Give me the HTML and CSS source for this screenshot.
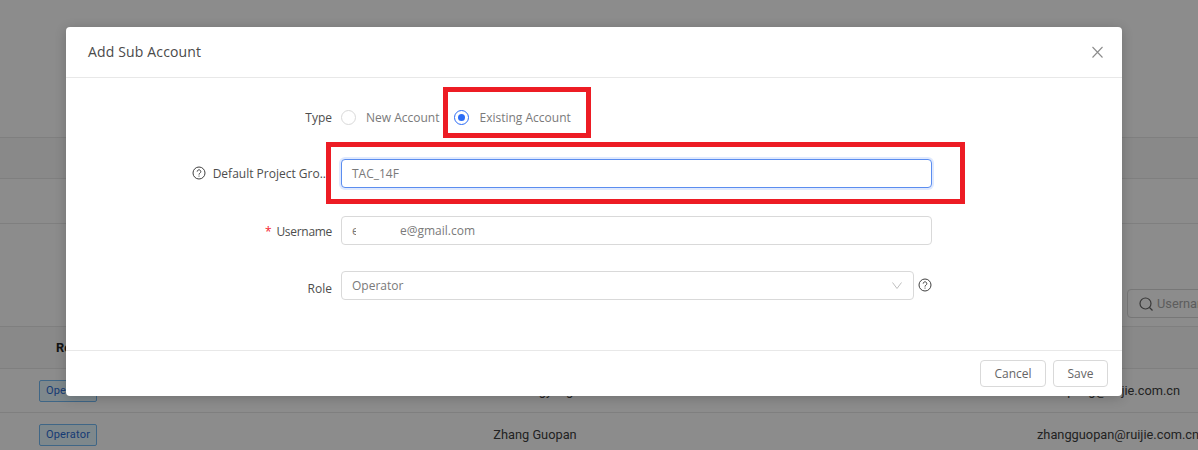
FILE: index.html
```html
<!DOCTYPE html>
<html lang="en">
<head>
    <meta charset="UTF-8">
    <meta name="viewport" content="width=device-width, initial-scale=1.0">
    <title>Add Sub Account</title>
    <link rel="stylesheet" href="styles.css">
</head>
<body>

<!-- Page behind the dialog -->
<div class="page">
    <div class="band band-head"></div>
    <div class="band band-row"></div>
    <div class="toolbar">
        <div class="search">
            <svg class="search-icon" width="14" height="14" viewBox="0 0 14 14"><circle cx="6.5" cy="6.5" r="5.5"/><path d="M10.5 10.5l3 3"/></svg>
            <span>Username</span>
        </div>
    </div>
    <div class="table-head"><span class="col-role">Role</span></div>
    <div class="table-row">
        <span class="col-role"><span class="tag">Operator</span></span>
        <span class="col-name">Liu Pengyang</span>
        <span class="col-mail">liupeng@ruijie.com.cn</span>
    </div>
    <div class="table-row">
        <span class="col-role"><span class="tag">Operator</span></span>
        <span class="col-name">Zhang Guopan</span>
        <span class="col-mail">zhangguopan@ruijie.com.cn</span>
    </div>
</div>

<div class="mask"></div>

<!-- Dialog -->
<div class="modal">
    <div class="modal-header">
        <span class="modal-title">Add Sub Account</span>
        <svg class="close" width="11" height="12" viewBox="0 0 11 12"><path d="M.5 1l10 10.5M10.5 1L.5 11.5"/></svg>
    </div>
    <div class="modal-body">
        <div class="form-row row-type">
            <label class="form-label">Type</label>
            <div class="radios">
                <span class="radio"><span class="radio-dot"></span>New Account</span>
                <span class="radio radio-on"><span class="radio-dot"></span>Existing Account</span>
            </div>
        </div>
        <div class="form-row row-group">
            <label class="form-label">
                <svg class="help" width="14" height="14" viewBox="0 0 14 14"><circle cx="7" cy="7" r="6"/><path d="M5.2 5.6a1.8 1.8 0 1 1 2.8 1.5c-.7.4-1 .8-1 1.5"/><path d="M7 9.6v1"/></svg>
                <span class="label-cut">Default Project Gro..</span>
            </label>
            <div class="input input-focus">TAC_14F</div>
        </div>
        <div class="form-row row-user">
            <label class="form-label"><span class="required">*</span>Username</label>
            <div class="input input-mail"><span class="mail-start">e</span><span class="mail-hidden"></span>e@gmail.com</div>
        </div>
        <div class="form-row row-role">
            <label class="form-label">Role</label>
            <div class="select-wrap">
                <div class="input select">
                    <span>Operator</span>
                    <svg class="arrow" width="10" height="7" viewBox="0 0 10 7"><path d="M.5 .5L5 6.5 9.5 .5"/></svg>
                </div>
                <svg class="help" width="14" height="14" viewBox="0 0 14 14"><circle cx="7" cy="7" r="6"/><path d="M5.2 5.6a1.8 1.8 0 1 1 2.8 1.5c-.7.4-1 .8-1 1.5"/><path d="M7 9.6v1"/></svg>
            </div>
        </div>
    </div>
    <div class="modal-footer">
        <button class="btn">Cancel</button>
        <button class="btn">Save</button>
    </div>
</div>

<!-- Red annotation boxes -->
<div class="mark mark-radio"></div>
<div class="mark mark-input"></div>

</body>
</html>
```

FILE: styles.css
```css
body {
    margin: 0;
    width: 1198px;
    height: 450px;
    overflow: hidden;
    position: relative;
    font-family: "Open Sans", "Noto Sans", sans-serif;
    font-size: 12px;
    color: #595959;
    background-color: #fff;
}

.page {
    height: 450px;
    padding-top: 137px;
    box-sizing: border-box;
    font-family: Roboto, sans-serif;
    font-size: 12.8px;
}

.band {
    border-top: 1px solid #e8e8e8;
}

.band-head {
    height: 40px;
    background-color: #fafafa;
}

.band-row {
    height: 44px;
}

.toolbar {
    height: 103px;
    border-top: 1px solid #e8e8e8;
    display: flex;
    justify-content: flex-end;
    align-items: flex-end;
    padding-bottom: 8px;
    box-sizing: border-box;
}

.search {
    width: 92px;
    height: 29px;
    margin-right: -21px;
    box-sizing: border-box;
    border: 1px solid #d9d9d9;
    border-radius: 4px;
    display: flex;
    align-items: center;
    gap: 4px;
    padding-left: 11px;
    color: #aaa;
    flex-shrink: 0;
}

.search-icon {
    fill: none;
    stroke: #666;
    stroke-width: 1.2;
    flex-shrink: 0;
}

.table-head {
    height: 42px;
    border-top: 1px solid #e8e8e8;
    background-color: #fafafa;
    display: flex;
    align-items: center;
    box-sizing: border-box;
    font-weight: 700;
    color: #262626;
}

.table-row {
    height: 44px;
    border-top: 1px solid #e8e8e8;
    display: flex;
    align-items: center;
    box-sizing: border-box;
    color: #404040;
}

.col-role {
    width: 58px;
    flex-shrink: 0;
    margin-left: 39px;
}

.table-head .col-role {
    margin-left: 56px;
}

.tag {
    display: block;
    width: 58px;
    height: 22px;
    line-height: 20px;
    box-sizing: border-box;
    text-align: center;
    font-size: 11px;
    letter-spacing: 0.2px;
    color: #2b6cd4;
    background-color: #e6f7ff;
    border: 1px solid #74bbf5;
    border-radius: 2px;
}

.col-name {
    width: 200px;
    margin-left: 338px;
    text-align: center;
    flex-shrink: 0;
}

.col-mail {
    width: 160px;
    margin-left: auto;
    margin-right: 1px;
    text-align: center;
    flex-shrink: 0;
}

.mask {
    position: absolute;
    top: 0;
    left: 0;
    width: 100%;
    height: 100%;
    background-color: rgba(0, 0, 0, 0.45);
}

.modal {
    position: absolute;
    top: 27px;
    left: 66px;
    width: 1056px;
    height: 369px;
    background-color: #fff;
    border-radius: 4px;
    box-shadow: 0 2px 12px rgba(0, 0, 0, 0.2);
    display: flex;
    flex-direction: column;
}

.modal-header {
    height: 50px;
    flex-shrink: 0;
    border-bottom: 1px solid #e8e8e8;
    display: flex;
    align-items: center;
    justify-content: space-between;
    padding: 0 19px 0 22px;
}

.modal-title {
    font-size: 14px;
    font-weight: 500;
    letter-spacing: 0.15px;
    color: #4a4a4a;
    margin-bottom: 2px;
}

.close {
    fill: none;
    stroke: #8c8c8c;
    stroke-width: 1.1;
}

.modal-body {
    flex: 1;
    padding-top: 22px;
}

.form-row {
    display: flex;
    align-items: center;
}

.row-type {
    height: 36px;
    margin-top: -1px;
}

.row-group {
    height: 30px;
    margin-top: 23px;
}

.row-user {
    height: 30px;
    margin-top: 27px;
}

.row-role {
    height: 30px;
    margin-top: 25px;
}

.form-label {
    width: 266px;
    flex-shrink: 0;
    margin-right: 9px;
    display: flex;
    align-items: center;
    justify-content: flex-end;
    color: #4d4d4d;
}

.row-user .form-label {
    letter-spacing: -0.3px;
    padding-top: 2px;
}

.row-role .form-label {
    margin-top: 6px;
}

.label-cut {
    margin-left: 7px;
    margin-right: 6px;
}

.required {
    color: #f5222d;
    margin-right: 5px;
}

.radios {
    display: flex;
    gap: 14px;
}

.radio {
    display: flex;
    align-items: center;
    color: #7a7a7a;
}

.radio-dot {
    width: 13px;
    height: 13px;
    border: 1px solid #d9d9d9;
    border-radius: 50%;
    margin-right: 10px;
    position: relative;
    flex-shrink: 0;
}

.radio-on .radio-dot {
    border-color: #2b6cf6;
    margin-right: 11px;
}

.radio-on .radio-dot::after {
    content: "";
    position: absolute;
    top: 3px;
    left: 3px;
    width: 7px;
    height: 7px;
    border-radius: 50%;
    background-color: #2b6cf6;
}

.input {
    width: 591px;
    height: 29px;
    box-sizing: border-box;
    border: 1px solid #d9d9d9;
    border-radius: 4px;
    padding: 0 10px;
    display: flex;
    align-items: center;
    color: #7a7a7a;
    background-color: #fff;
}

.input-focus {
    border-color: #5b8def;
    box-shadow: 0 0 0 2px rgba(43, 108, 246, 0.15);
}

.input-mail,
.select {
    padding-top: 1px;
}

.mail-start {
    width: 4px;
    overflow: hidden;
}

.mail-hidden {
    width: 44px;
}

.select-wrap {
    display: flex;
    align-items: center;
    gap: 4px;
}

.select {
    width: 573px;
    justify-content: space-between;
    padding-right: 11px;
}

.arrow {
    fill: none;
    stroke: #bfbfbf;
    stroke-width: 1;
}

.help {
    fill: none;
    stroke: #404040;
    stroke-width: 1;
    flex-shrink: 0;
}

.modal-footer {
    height: 46px;
    box-sizing: border-box;
    flex-shrink: 0;
    border-top: 1px solid #e8e8e8;
    display: flex;
    justify-content: flex-end;
    align-items: flex-start;
    gap: 7px;
    padding: 9px 14px 0 0;
}

.btn {
    height: 27px;
    padding: 0 13.5px;
    background-color: #fff;
    border: 1px solid #d9d9d9;
    border-radius: 4px;
    font-family: inherit;
    font-size: 12px;
    color: #666;
}

.mark {
    position: absolute;
    box-sizing: border-box;
    border: 5px solid #ed1c24;
}

.mark-radio {
    top: 87px;
    left: 443px;
    width: 148px;
    height: 51px;
}

.mark-input {
    top: 142px;
    left: 326px;
    width: 639px;
    height: 62px;
}
```
